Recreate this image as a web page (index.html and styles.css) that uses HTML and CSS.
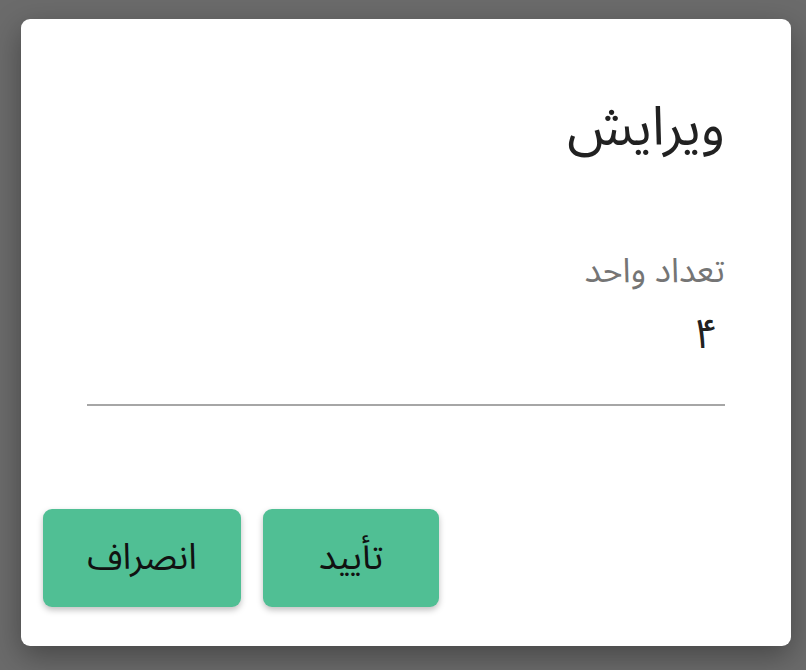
FILE: index.html
```html
<!DOCTYPE html>
<html lang="fa" dir="rtl">
<head>
    <meta charset="UTF-8">
    <meta name="viewport" content="width=device-width, initial-scale=1.0">
    <title>ویرایش</title>
    <link rel="stylesheet" href="styles.css">
</head>
<body>
    <div class="dialog">
        <div class="dialog-body">
            <h1 class="dialog-title">ویرایش</h1>
            <div class="field">
                <label for="qty">تعداد واحد</label>
                <input id="qty" type="text" value="۴">
            </div>
        </div>
        <div class="dialog-actions">
            <button class="btn">تأیید</button>
            <button class="btn btn-wide">انصراف</button>
        </div>
    </div>
</body>
</html>
```

FILE: styles.css
```css
body {
    font-family: 'Noto Sans Arabic', 'Noto Sans Arabic UI', 'Noto Naskh Arabic', 'DejaVu Sans', sans-serif;
    background-color: #6b6b6b;
    margin: 0;
    padding: 19px 15px 0 21px;
    height: 670px;
    box-sizing: border-box;
    overflow: hidden;
}

.dialog {
    background-color: #ffffff;
    width: 770px;
    height: 627px;
    border-radius: 9px;
    box-shadow: 0 10px 30px rgba(0, 0, 0, 0.35);
    display: flex;
    flex-direction: column;
    box-sizing: border-box;
}

.dialog-body {
    padding: 0 66px 0 66px;
    flex: 1;
}

.dialog-title {
    font-size: 54px;
    font-weight: 400;
    color: #212121;
    margin: 77px 0 0;
    line-height: 64px;
}

.field {
    margin-top: 89px;
}

label {
    display: block;
    font-size: 34px;
    color: #757575;
    line-height: 44px;
}

input {
    display: block;
    width: 100%;
    box-sizing: border-box;
    border: none;
    border-bottom: 2px solid #a6a6a6;
    font-family: inherit;
    font-size: 42px;
    line-height: 50px;
    height: 113px;
    color: #212121;
    padding: 16px 7px 45px;
    outline: none;
    background: transparent;
    direction: rtl;
}

.dialog-actions {
    display: flex;
    justify-content: flex-end;
    gap: 22px;
    padding: 0 22px 39px;
}

.btn {
    background-color: #50bf94;
    color: #111111;
    border: none;
    border-radius: 9px;
    font-family: inherit;
    font-size: 36px;
    width: 176px;
    height: 98px;
    box-shadow: 0 3px 6px rgba(0, 0, 0, 0.25);
    cursor: pointer;
}

.btn-wide {
    width: 198px;
}
```
